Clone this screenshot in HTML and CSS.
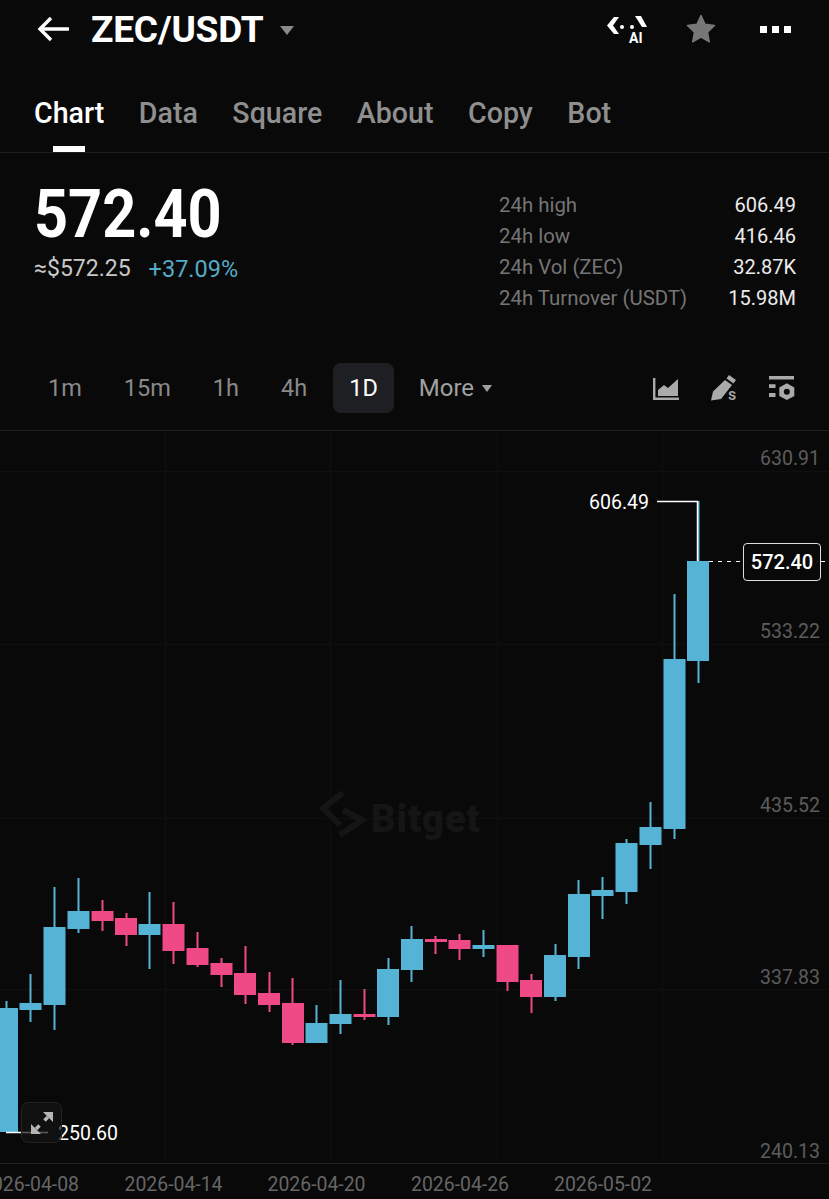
FILE: index.html
```html
<!DOCTYPE html>
<html>
    <head>
        <meta charset="utf-8">
        <title>ZEC/USDT</title>
        <link rel="stylesheet" href="styles.css">
    </head>
    <body>
        <div id="app">
            <header class="topbar">
                <svg class="icon-back" viewBox="0 0 34 28" width="34" height="28"><path d="M32 14H3M14 3 3 14l11 11" fill="none" stroke="#fff" stroke-width="3.4"/></svg>
                <h1 class="pair">ZEC/USDT</h1>
                <span class="pair-caret"></span>
                <div class="topbar-actions">
                    <svg class="icon-ai" viewBox="0 0 42 32" width="42" height="32">
                        <path d="M8 4 1 12.500 8 21h5L7 12.500 13 4z" fill="#fff"/>
                        <path d="M29 3h6l6 11h-5z" fill="#fff"/>
                        <circle cx="16" cy="14" r="2" fill="#fff"/>
                        <circle cx="26" cy="14" r="2" fill="#fff"/>
                        <text x="23" y="30" class="ai-text">AI</text>
                    </svg>
                    <svg class="icon-star" viewBox="0 0 30 30" width="30" height="30"><path d="M15 1.500 19 10.300 28.500 11.500 21.500 18.200 23.300 27.800 15 23.100 6.700 27.800 8.500 18.200 1.500 11.500 11 10.300z" fill="#777" stroke="#777" stroke-width="1.500" stroke-linejoin="round"/></svg>
                    <div class="icon-dots"><i></i><i></i><i></i></div>
                </div>
            </header>

            <nav class="tabs">
                <a class="tab active">Chart</a>
                <a class="tab">Data</a>
                <a class="tab">Square</a>
                <a class="tab">About</a>
                <a class="tab">Copy</a>
                <a class="tab">Bot</a>
            </nav>

            <section class="summary">
                <div class="price-box">
                    <div class="price">572.40</div>
                    <div class="price-sub"><span class="fiat">≈$572.25</span><span class="change">+37.09%</span></div>
                </div>
                <dl class="stats">
                    <div class="stat"><dt>24h high</dt><dd>606.49</dd></div>
                    <div class="stat"><dt>24h low</dt><dd>416.46</dd></div>
                    <div class="stat"><dt>24h Vol (ZEC)</dt><dd>32.87K</dd></div>
                    <div class="stat"><dt>24h Turnover (USDT)</dt><dd>15.98M</dd></div>
                </dl>
            </section>

            <div class="intervals">
                <button class="iv">1m</button>
                <button class="iv">15m</button>
                <button class="iv">1h</button>
                <button class="iv">4h</button>
                <button class="iv selected">1D</button>
                <button class="iv more">More<span class="more-caret"></span></button>
                <div class="tools">
                    <svg viewBox="0 0 26 26" width="26" height="26"><path d="M1.200 3V23.800H26" fill="none" stroke="#aaa" stroke-width="2.400"/><path d="M5 21V15l6-5 4 3 10-9v17z" fill="#aaa"/></svg>
                    <svg viewBox="0 0 30 26" width="30" height="26"><path d="M20 0l7 5-2.500 3.500-7-5zM16 5l7 5-11 14-10 1.500 2-9z" fill="#aaa"/><text x="19" y="25" class="tool-s">s</text></svg>
                    <svg viewBox="0 0 26 26" width="26" height="26"><path d="M0 1h25v3.500H0zM0 9.300h6.500V13H0zM0 18h6.500v4H0z" fill="#aaa"/><path d="M17.800 8.300 25.300 12.500V21L17.800 25 10.300 21V12.500z" fill="#aaa"/><circle cx="17.800" cy="16.700" r="3" fill="#090909"/></svg>
                </div>
            </div>

            <div class="chart">
                <svg class="plot" viewBox="0 0 829 769" width="829" height="769">
                    <g class="grid">
                        <path d="M0 41.500H829M0 214.500H829M0 388.500H829M0 559.500H829"/>
                        <path d="M165.500 0V733M330.500 0V733M497.500 0V733M662.500 0V733"/>
                    </g>
                    <path class="axis" d="M0 .5H829M0 733.500H829"/>
                    <text class="wm" x="371" y="402">Bitget</text>
                    <path class="wm-logo" d="M343 363 323 378l17 17M343 380l19 10-22 15"/>

                    <g class="wick-up">
                        <path d="M6.500 571V702M30.500 544V592M54.500 457V600M78.500 448V503M149.500 462V539M316.500 575V613M340.500 550V604M388.500 528V595M411.500 496V552M483.500 500V527M555.500 514V571M578.500 450V539M602.500 447V489M626.500 409V474M650.500 372V439M674.500 164V409M698.500 71V253"/>
                    </g>
                    <g class="wick-down">
                        <path d="M102.500 470V501M126.500 483V516M173.500 472V534M197.500 502V537M221.500 528V557M245.500 516V574M269.500 542V582M292.500 548V615M364.500 559V590M435.500 506V524M459.500 504V530M507.500 515V561M531.500 544V583"/>
                    </g>
                    <g class="body-up">
                        <rect x="-4" y="578" width="22" height="124"/>
                        <rect x="19.500" y="573" width="22" height="7"/>
                        <rect x="43.500" y="497" width="22" height="78"/>
                        <rect x="67.500" y="481" width="22" height="18"/>
                        <rect x="138.500" y="494" width="22" height="11"/>
                        <rect x="305.500" y="593" width="22" height="20"/>
                        <rect x="329.500" y="584" width="22" height="10"/>
                        <rect x="377" y="539" width="22" height="48"/>
                        <rect x="401" y="509" width="22" height="31"/>
                        <rect x="472.500" y="515" width="22" height="4"/>
                        <rect x="544" y="525" width="22" height="42"/>
                        <rect x="568" y="464" width="22" height="63"/>
                        <rect x="591.500" y="460" width="22" height="6"/>
                        <rect x="615.500" y="413" width="22" height="49"/>
                        <rect x="639.500" y="397" width="22" height="18"/>
                        <rect x="663.500" y="229" width="22" height="170"/>
                        <rect x="687" y="131" width="22" height="100"/>
                    </g>
                    <g class="body-down">
                        <rect x="91.500" y="481" width="22" height="10"/>
                        <rect x="115" y="488" width="22" height="17"/>
                        <rect x="162.500" y="494" width="22" height="27"/>
                        <rect x="186.500" y="518" width="22" height="17"/>
                        <rect x="210.500" y="533" width="22" height="12"/>
                        <rect x="234" y="543" width="22" height="22"/>
                        <rect x="258" y="563" width="22" height="12"/>
                        <rect x="282" y="573" width="22" height="40"/>
                        <rect x="353.500" y="584" width="22" height="3"/>
                        <rect x="425" y="509" width="22" height="3"/>
                        <rect x="448.500" y="510" width="22" height="9"/>
                        <rect x="496.500" y="515" width="22" height="37"/>
                        <rect x="520" y="550" width="22" height="17"/>
                    </g>

                    <path class="hi-lo" d="M657 71.500H697.500V131"/>
                    <path class="hi-lo" d="M6 702.500H48"/>
                    <text class="mark" x="649" y="79" text-anchor="end">606.49</text>
                    <text class="mark" x="58" y="710">250.60</text>

                    <path class="last-line" d="M709 131.500H744M821 131.500H829"/>

                    <g class="y-labels">
                        <text x="820" y="35">630.91</text>
                        <text x="820" y="208">533.22</text>
                        <text x="820" y="382">435.52</text>
                        <text x="820" y="554">337.83</text>
                        <text x="820" y="728">240.13</text>
                    </g>
                    <g class="x-labels">
                        <text x="30" y="761">2026-04-08</text>
                        <text x="173.500" y="761">2026-04-14</text>
                        <text x="316.500" y="761">2026-04-20</text>
                        <text x="460" y="761">2026-04-26</text>
                        <text x="603" y="761">2026-05-02</text>
                    </g>
                </svg>
                <div class="last-price">572.40</div>
                <button class="expand">
                    <svg viewBox="0 0 24 24" width="24" height="24"><path d="M13 1h10v10zM11 23H1V13z" fill="#b5b5b5"/><path d="M18 6l-3.500 3.500M6 18l3.500-3.500" stroke="#b5b5b5" stroke-width="3.500"/></svg>
                </button>
            </div>
        </div>
    </body>
</html>
```

FILE: styles.css
```css
html, body {
    margin: 0px;
    padding: 0px;
    background: #090909;
}

#app {
    width: 829px;
    height: 1199px;
    overflow: hidden;
    font-family: Roboto, "Liberation Sans", sans-serif;
    color: #fff;
}

/* top bar */
.topbar {
    display: flex;
    align-items: center;
    height: 58px;
    padding-left: 37px;
    padding-right: 38px;
}

.pair {
    margin: 0 0 0 20px;
    font-size: 37px;
    font-weight: 700;
    letter-spacing: -0.2px;
}

.pair-caret {
    width: 0;
    height: 0;
    margin-left: 16px;
    margin-top: 2px;
    border-left: 7px solid transparent;
    border-right: 7px solid transparent;
    border-top: 9px solid #8a8a8a;
}

.topbar-actions {
    display: flex;
    align-items: center;
    margin-left: auto;
}

.icon-ai {
    margin-right: 38px;
}

.ai-text {
    font-size: 14px;
    font-weight: 700;
    fill: #fff;
}

.icon-star {
    margin-right: 44px;
}

.icon-dots {
    display: flex;
    gap: 5px;
}

.icon-dots i {
    width: 7px;
    height: 7px;
    background: #fff;
}

/* tabs */
.tabs {
    display: flex;
    gap: 34.500px;
    height: 95px;
    padding-left: 34px;
    box-sizing: border-box;
    border-bottom: 1px solid #1e1e1e;
}

.tab {
    position: relative;
    padding-top: 38px;
    font-size: 28.600px;
    font-weight: 500;
    color: #8f8f8f;
}

.tab.active {
    color: #fff;
}

.tab.active::after {
    content: "";
    position: absolute;
    left: 19px;
    bottom: 0;
    width: 32px;
    height: 6px;
    background: #fff;
}

/* price + stats */
.summary {
    display: flex;
    justify-content: space-between;
    height: 197px;
    padding: 0 33px 0 34px;
    box-sizing: border-box;
}

.price {
    margin-top: 27px;
    font-size: 66px;
    font-weight: 700;
    line-height: 70px;
    transform: scaleX(0.9);
    transform-origin: left center;
}

.price-sub {
    display: flex;
    gap: 18px;
    font-size: 23px;
    line-height: 30px;
    margin-top: 4px;
}

.fiat {
    color: #c8c8c8;
}

.change {
    font-size: 23.500px;
    color: #55abc8;
}

.stats {
    width: 297px;
    margin: 36px 0 0 0;
}

.stat {
    display: flex;
    justify-content: space-between;
    height: 31px;
    font-size: 20px;
    line-height: 32px;
}

.stat dt {
    font-size: 20.400px;
    color: #757575;
}

.stat dd {
    margin: 0;
    color: #ececec;
}

/* interval bar */
.intervals {
    display: flex;
    align-items: center;
    height: 76px;
    padding-left: 32px;
    padding-right: 34px;
}

.iv {
    height: 50px;
    padding: 0 16px;
    margin-right: 10px;
    background: none;
    border: 0;
    border-radius: 8px;
    font-family: inherit;
    font-size: 23.500px;
    color: #8a8a8a;
}

.iv.selected {
    background: #1e1f22;
    color: #fff;
}

.iv.more {
    display: flex;
    align-items: center;
    margin-left: 6px;
    font-size: 24px;
    color: #a0a0a0;
    padding: 0 9px;
}

.more-caret {
    width: 0;
    height: 0;
    margin-left: 8px;
    border-left: 5px solid transparent;
    border-right: 5px solid transparent;
    border-top: 7px solid #a0a0a0;
}

.tools {
    display: flex;
    align-items: center;
    gap: 30px;
    margin-left: auto;
}

.tools svg {
    overflow: visible;
}

.tool-s {
    font-size: 16px;
    font-weight: 500;
    fill: #aaa;
}

/* chart */
.chart {
    position: relative;
    height: 769px;
    margin-top: 4px;
}

.plot {
    display: block;
}

.grid path {
    fill: none;
    stroke: #101010;
}

.axis {
    stroke: #1f1f1f;
}

.wm {
    font-size: 38px;
    font-weight: 900;
    letter-spacing: 1px;
    fill: #151515;
}

.wm-logo {
    fill: none;
    stroke: #151515;
    stroke-width: 6px;
}

.wick-up path {
    stroke: #55b4d6;
    stroke-width: 2px;
}

.wick-down path {
    stroke: #ef4a85;
    stroke-width: 2px;
}

.body-up rect {
    fill: #55b4d6;
}

.body-down rect {
    fill: #ef4a85;
}

.hi-lo {
    fill: none;
    stroke: #fff;
    stroke-width: 1.500px;
}

.mark {
    font-size: 19.500px;
    fill: #fff;
}

.last-line {
    stroke: #fff;
    stroke-dasharray: 4 5;
}

.y-labels text {
    font-size: 19.500px;
    fill: #5c5c5c;
    text-anchor: end;
}

.x-labels text {
    font-size: 19.400px;
    fill: #666;
    text-anchor: middle;
}

.last-price {
    position: absolute;
    left: 743px;
    top: 113px;
    width: 78px;
    height: 38px;
    box-sizing: border-box;
    border: 1px solid #ddd;
    border-radius: 4px;
    background: #090909;
    font-size: 20px;
    font-weight: 500;
    line-height: 36px;
    text-align: center;
}

.expand {
    position: absolute;
    left: 21px;
    top: 672px;
    width: 41px;
    height: 41px;
    padding: 8px;
    border: 1px solid #222;
    border-radius: 7px;
    background: rgba(20, 20, 20, 0.7);
}

.expand svg {
    display: block;
}
```
